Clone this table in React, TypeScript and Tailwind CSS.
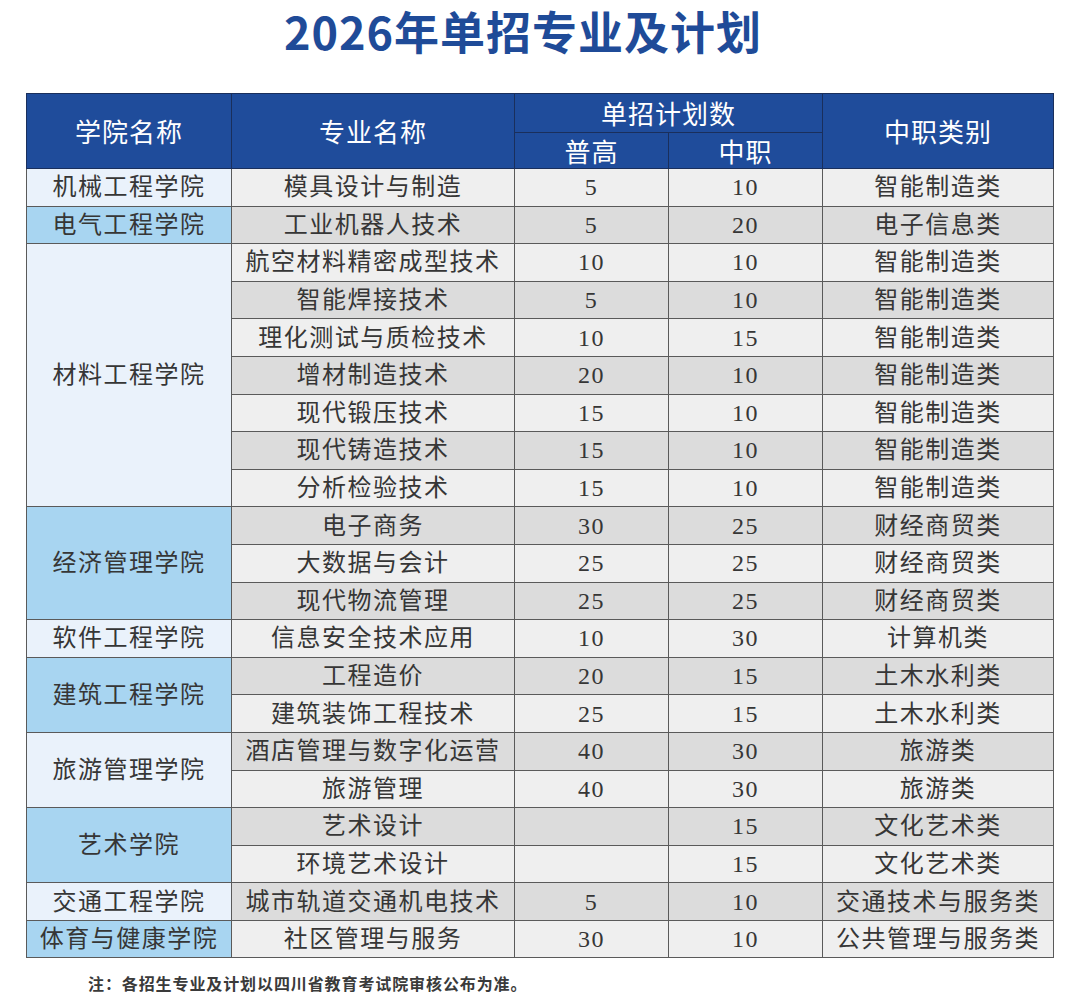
const light = "bg-[#eaf2fb]";
const blue = "bg-[#a8d5f1]";

type Row = { major: string; pg: string; zz: string; kind: string };
type Group = { college: string; tone: string; rows: Row[] };

const groups: Group[] = [
  { college: "机械工程学院", tone: light, rows: [{ major: "模具设计与制造", pg: "5", zz: "10", kind: "智能制造类" }] },
  { college: "电气工程学院", tone: blue, rows: [{ major: "工业机器人技术", pg: "5", zz: "20", kind: "电子信息类" }] },
  {
    college: "材料工程学院",
    tone: light,
    rows: [
      { major: "航空材料精密成型技术", pg: "10", zz: "10", kind: "智能制造类" },
      { major: "智能焊接技术", pg: "5", zz: "10", kind: "智能制造类" },
      { major: "理化测试与质检技术", pg: "10", zz: "15", kind: "智能制造类" },
      { major: "增材制造技术", pg: "20", zz: "10", kind: "智能制造类" },
      { major: "现代锻压技术", pg: "15", zz: "10", kind: "智能制造类" },
      { major: "现代铸造技术", pg: "15", zz: "10", kind: "智能制造类" },
      { major: "分析检验技术", pg: "15", zz: "10", kind: "智能制造类" },
    ],
  },
  {
    college: "经济管理学院",
    tone: blue,
    rows: [
      { major: "电子商务", pg: "30", zz: "25", kind: "财经商贸类" },
      { major: "大数据与会计", pg: "25", zz: "25", kind: "财经商贸类" },
      { major: "现代物流管理", pg: "25", zz: "25", kind: "财经商贸类" },
    ],
  },
  { college: "软件工程学院", tone: light, rows: [{ major: "信息安全技术应用", pg: "10", zz: "30", kind: "计算机类" }] },
  {
    college: "建筑工程学院",
    tone: blue,
    rows: [
      { major: "工程造价", pg: "20", zz: "15", kind: "土木水利类" },
      { major: "建筑装饰工程技术", pg: "25", zz: "15", kind: "土木水利类" },
    ],
  },
  {
    college: "旅游管理学院",
    tone: light,
    rows: [
      { major: "酒店管理与数字化运营", pg: "40", zz: "30", kind: "旅游类" },
      { major: "旅游管理", pg: "40", zz: "30", kind: "旅游类" },
    ],
  },
  {
    college: "艺术学院",
    tone: blue,
    rows: [
      { major: "艺术设计", pg: "", zz: "15", kind: "文化艺术类" },
      { major: "环境艺术设计", pg: "", zz: "15", kind: "文化艺术类" },
    ],
  },
  { college: "交通工程学院", tone: light, rows: [{ major: "城市轨道交通机电技术", pg: "5", zz: "10", kind: "交通技术与服务类" }] },
  { college: "体育与健康学院", tone: blue, rows: [{ major: "社区管理与服务", pg: "30", zz: "10", kind: "公共管理与服务类" }] },
];

const th = "border-[1.5px] border-[#1a2f5c] font-normal text-white text-[26px] tracking-[1px] leading-none";
const td = "border-[1.5px] border-[#5a5a5a] text-center text-[#363636] text-[24px] tracking-[1.5px] leading-none p-0";

export default function App() {
  let idx = 0;
  return (
    <div className="w-[1080px] h-[1008px] bg-white font-['Liberation_Serif','Noto_Sans_CJK_SC',serif]">
      <div className="flex justify-center pr-[34px] pt-[4px] h-[93px]">
        <h1 className="font-['Noto_Sans_CJK_SC',sans-serif] font-bold text-[45px] leading-[54px] text-[#1f4b98] tracking-[1px]">
          2026年单招专业及计划
        </h1>
      </div>

      <table className="ml-[26px] w-[1027px] border-collapse table-fixed border-[1.5px] border-[#8a8a8a]">
        <colgroup>
          <col className="w-[205px]" />
          <col className="w-[283px]" />
          <col className="w-[154px]" />
          <col className="w-[154px]" />
          <col className="w-[231px]" />
        </colgroup>
        <thead className="bg-[#1f4c9b] font-['Noto_Sans_CJK_SC',sans-serif]">
          <tr className="h-[39px]">
            <th rowSpan={2} className={th}>学院名称</th>
            <th rowSpan={2} className={th}>专业名称</th>
            <th colSpan={2} className={th}>单招计划数</th>
            <th rowSpan={2} className={th}>中职类别</th>
          </tr>
          <tr className="h-[36px]">
            <th className={th}>普高</th>
            <th className={th}>中职</th>
          </tr>
        </thead>
        <tbody>
          {groups.map((g) =>
            g.rows.map((r, i) => {
              const shade = idx++ % 2 === 0 ? "bg-[#efefef]" : "bg-[#dcdcdc]";
              return (
                <tr key={r.major} className="h-[37.6px]">
                  {i === 0 && (
                    <td rowSpan={g.rows.length} className={`${td} ${g.tone}`}>
                      {g.college}
                    </td>
                  )}
                  <td className={`${td} ${shade}`}>{r.major}</td>
                  <td className={`${td} ${shade}`}>{r.pg}</td>
                  <td className={`${td} ${shade}`}>{r.zz}</td>
                  <td className={`${td} ${shade}`}>{r.kind}</td>
                </tr>
              );
            })
          )}
        </tbody>
      </table>

      <p className="mt-[17px] ml-[88px] font-['Noto_Sans_CJK_SC',sans-serif] font-bold text-[16px] leading-none text-[#3a3a3a] tracking-[0.9px]">
        注：各招生专业及计划以四川省教育考试院审核公布为准。
      </p>
    </div>
  );
}
